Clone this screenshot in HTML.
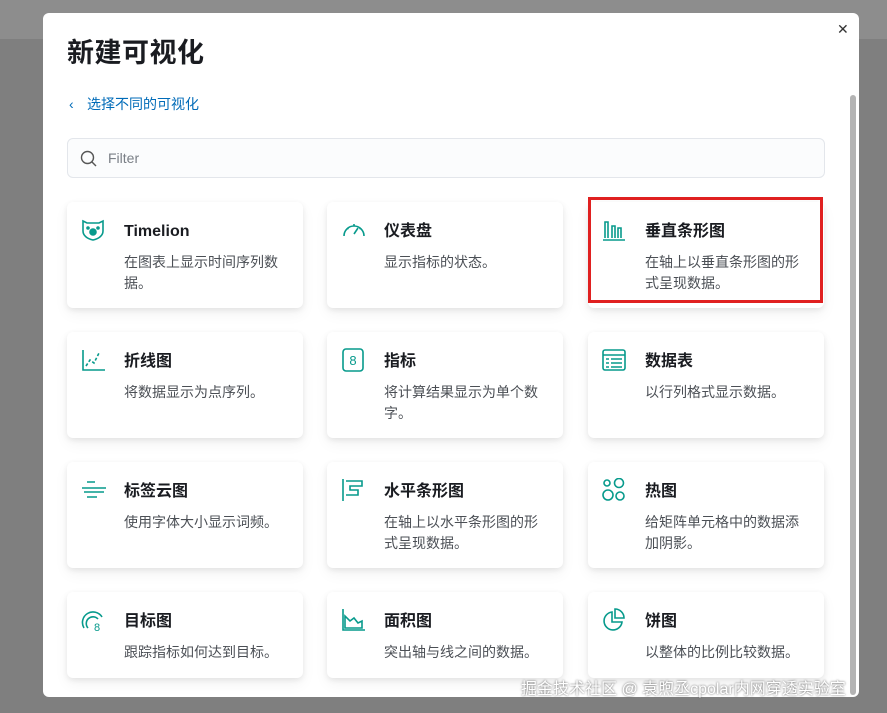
<!DOCTYPE html>
<html><head><meta charset="utf-8"><style>
*{margin:0;padding:0;box-sizing:border-box}
body{width:887px;height:713px;overflow:hidden;background:#7f7f7f;font-family:"Liberation Sans","Noto Sans CJK SC",sans-serif;position:relative}
.top{position:absolute;left:0;top:0;width:887px;height:39px;background:#8d8d8d}
.modal{position:absolute;left:43px;top:13px;width:816px;height:684px;background:#fff;border-radius:6px;overflow:hidden}
h1{position:absolute;left:24px;top:22px;font-size:27px;line-height:36px;font-weight:bold;color:#1a1c21;letter-spacing:0.5px}
.back{position:absolute;left:26px;top:81px;font-size:14px;line-height:20px;color:#006bb8}
.close{position:absolute;left:794px;top:8px;font-size:14px;color:#333}
.filter{position:absolute;left:24px;top:125px;width:758px;height:40px;border:1px solid #e3e6eb;border-radius:6px;background:#fbfcfd}
.filter span{position:absolute;left:40px;top:11px;font-size:14px;color:#7a7f86}
.sb{position:absolute;left:807px;top:82px;width:6px;height:600px;background:#b4b4b4;border-radius:3px}
.card{position:absolute;width:236px;height:106px;background:#fff;border-radius:6px;box-shadow:0 2px 6px rgba(0,0,0,.08),0 6px 14px rgba(0,0,0,.05)}
.card svg{position:absolute;left:14px;top:16px}
.card b{position:absolute;left:57px;top:19px;font-size:16px;line-height:22px;height:22px;color:#1a1c21}
.card p{position:absolute;left:57px;top:50px;width:158px;font-size:14px;line-height:21px;color:#4b4f55}
.red{position:absolute;left:545px;top:184px;width:235px;height:106px;border:3px solid #e02020}
.wm{position:absolute;left:521px;top:675px;font-size:16px;color:#fff;text-shadow:0 0 2px #555;white-space:nowrap}
</style></head><body>
<div class="top"></div>
<div class="modal">
<h1>新建可视化</h1>
<div class="close">✕</div>
<div class="back"><span style="display:inline-block;width:18px">‹</span>选择不同的可视化</div>
<div class="filter"><svg style="position:absolute;left:12px;top:11px" width="18" height="18" viewBox="0 0 18 18" fill="none" stroke="#555" stroke-width="1.4"><circle cx="7.5" cy="7.5" r="6"/><path d="M12 12l4 4"/></svg><span>Filter</span></div>
<div class="sb"></div>

<div class="card" style="left:24px;top:189px"><svg width="24" height="24" viewBox="0 0 24 24" fill="none" stroke="#079a8c" stroke-width="1.6"><path d="M2 3l4 2h12l4-2v10c0 5-5 8-10 9C7 21 2 18 2 13z"/><circle cx="12" cy="14" r="3" fill="#079a8c"/><circle cx="7" cy="10" r="1" fill="#079a8c"/><circle cx="17" cy="10" r="1" fill="#079a8c"/></svg><b>Timelion</b><p>在图表上显示时间序列数据。</p></div>
<div class="card" style="left:284px;top:189px"><svg width="26" height="24" viewBox="0 0 26 24" fill="none" stroke="#079a8c" stroke-width="1.6"><path d="M3 18A10 10 0 1 1 23 18"/><path d="M13 16l4-6"/><path d="M13 6v2M6 10l1.5 1M20 10l-1.5 1"/></svg><b>仪表盘</b><p>显示指标的状态。</p></div>
<div class="card" style="left:545px;top:189px"><svg width="24" height="24" viewBox="0 0 24 24" fill="none" stroke="#079a8c" stroke-width="1.6"><path d="M1 22h22M3 20V4h3v16M10 20V8h3v12M16 20V10h3v10"/></svg><b>垂直条形图</b><p>在轴上以垂直条形图的形式呈现数据。</p></div>

<div class="card" style="left:24px;top:319px"><svg width="24" height="24" viewBox="0 0 24 24" fill="none" stroke="#079a8c" stroke-width="1.6"><path d="M2 2v20h22"/><path d="M5 18l4-6 4 3 5-10" stroke-dasharray="3 2"/></svg><b>折线图</b><p>将数据显示为点序列。</p></div>
<div class="card" style="left:284px;top:319px"><svg width="24" height="24" viewBox="0 0 24 24" fill="none" stroke="#079a8c" stroke-width="1.6"><rect x="2" y="1" width="20" height="22" rx="3"/><text x="12" y="17" font-size="13" text-anchor="middle" fill="#079a8c" stroke="none" font-family="Liberation Sans">8</text></svg><b>指标</b><p>将计算结果显示为单个数字。</p></div>
<div class="card" style="left:545px;top:319px"><svg width="24" height="24" viewBox="0 0 24 24" fill="none" stroke="#079a8c" stroke-width="1.6"><rect x="1" y="2" width="22" height="20" rx="2"/><path d="M1 7h22M4 11h3M9 11h11M4 15h3M9 15h11M4 19h3M9 19h11"/></svg><b>数据表</b><p>以行列格式显示数据。</p></div>

<div class="card" style="left:24px;top:449px"><svg width="26" height="24" viewBox="0 0 26 24" fill="none" stroke="#079a8c" stroke-width="1.6"><path d="M6 4h8M1 10h24M3 14h20M6 19h10"/></svg><b>标签云图</b><p>使用字体大小显示词频。</p></div>
<div class="card" style="left:284px;top:449px"><svg width="24" height="24" viewBox="0 0 24 24" fill="none" stroke="#079a8c" stroke-width="1.6"><path d="M2 1v22M5 3h16v5H9v4h8v5H5"/></svg><b>水平条形图</b><p>在轴上以水平条形图的形式呈现数据。</p></div>
<div class="card" style="left:545px;top:449px"><svg width="26" height="24" viewBox="0 0 26 24" fill="none" stroke="#079a8c" stroke-width="1.6"><circle cx="5" cy="5" r="3"/><circle cx="17" cy="5" r="4.5"/><circle cx="6" cy="17" r="5"/><circle cx="18" cy="18" r="4"/></svg><b>热图</b><p>给矩阵单元格中的数据添加阴影。</p></div>

<div class="card" style="left:24px;top:579px;height:86px"><svg width="24" height="24" viewBox="0 0 24 24" fill="none" stroke="#079a8c" stroke-width="1.6"><path d="M3 20A10 10 0 0 1 21 9"/><path d="M7 20A6 6 0 0 1 17 11"/><text x="16" y="23" font-size="11" text-anchor="middle" fill="#079a8c" stroke="none" font-family="Liberation Sans">8</text></svg><b>目标图</b><p>跟踪指标如何达到目标。</p></div>
<div class="card" style="left:284px;top:579px;height:86px"><svg width="24" height="24" viewBox="0 0 24 24" fill="none" stroke="#079a8c" stroke-width="1.6"><path d="M2 1v21h22"/><path d="M4 20V8l5 5 4-3 4 5 4-2v7z"/></svg><b>面积图</b><p>突出轴与线之间的数据。</p></div>
<div class="card" style="left:545px;top:579px;height:86px"><svg width="24" height="24" viewBox="0 0 24 24" fill="none" stroke="#079a8c" stroke-width="1.6"><path d="M10 4A9 9 0 1 0 20 14H10z"/><path d="M13 1a9 9 0 0 1 9 9h-9z"/></svg><b>饼图</b><p>以整体的比例比较数据。</p></div>
<div class="red"></div>
</div>
<div class="wm">掘金技术社区 @ 袁煦丞cpolar内网穿透实验室</div>
</body></html>
